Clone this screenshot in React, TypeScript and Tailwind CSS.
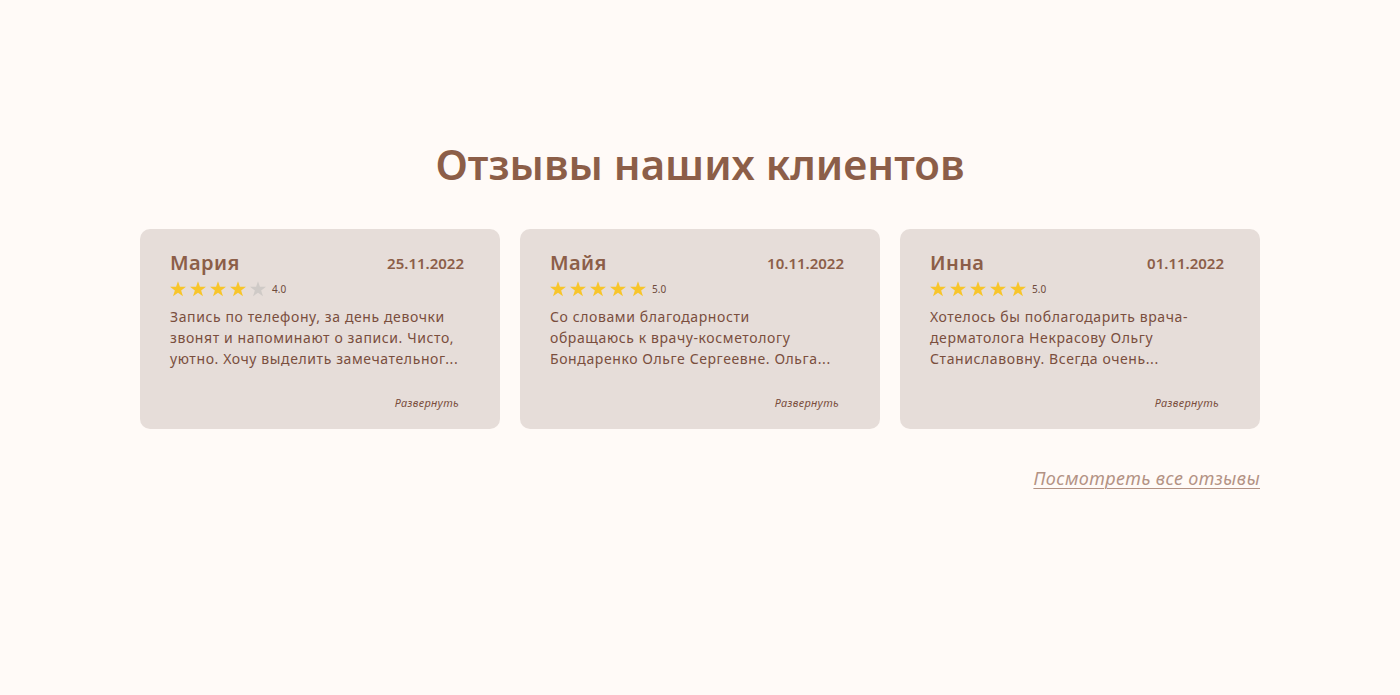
const reviews = [
  {
    name: "Мария",
    date: "25.11.2022",
    rating: 4,
    lines: ["Запись по телефону, за день девочки", "звонят и напоминают о записи. Чисто,", "уютно. Хочу выделить замечательног..."],
  },
  {
    name: "Майя",
    date: "10.11.2022",
    rating: 5,
    lines: ["Со словами благодарности", "обращаюсь к врачу-косметологу", "Бондаренко Ольге Сергеевне. Ольга..."],
  },
  {
    name: "Инна",
    date: "01.11.2022",
    rating: 5,
    lines: ["Хотелось бы поблагодарить врача-", "дерматолога Некрасову Ольгу", "Станиславовну. Всегда очень..."],
  },
];

function Star({ filled }: { filled: boolean }) {
  return (
    <svg width="16" height="16" viewBox="0 0 24 23" className={filled ? "fill-[#f7c52b]" : "fill-[#cfcac7]"}>
      <path d="M12 0l2.9 8.3H24l-7.3 5.4 2.8 8.8L12 17.1l-7.5 5.4 2.8-8.8L0 8.3h9.1z" />
    </svg>
  );
}

export default function App() {
  return (
    <div className="min-h-[695px] bg-[#fffaf7] font-['Noto_Sans',sans-serif]">
      <div className="mx-auto w-[1120px] pt-[135px]">
        <h2 className="text-center text-[42px] font-semibold leading-[58px] text-[#8c5e48]">
          Отзывы наших клиентов
        </h2>

        <div className="mt-[36px] grid grid-cols-3 gap-5">
          {reviews.map((r) => (
            <div key={r.name} className="flex h-[200px] flex-col rounded-[10px] bg-[#e6ddd9] pl-[30px] pr-[36px] pt-[21px]">
              <div className="flex items-center justify-between">
                <span className="text-[20px] font-semibold leading-[26px] tracking-[0.4px] text-[#8c5e48]">{r.name}</span>
                <span className="text-[15px] font-semibold text-[#8c5e48]">{r.date}</span>
              </div>
              <div className="mt-[5px] flex items-center gap-[4px]">
                {[1, 2, 3, 4, 5].map((i) => (
                  <Star key={i} filled={i <= r.rating} />
                ))}
                <span className="ml-[2px] text-[10px] text-[#6e4a3b]">{r.rating.toFixed(1)}</span>
              </div>
              <p className="mt-[9px] whitespace-nowrap text-[14px] leading-[21px] tracking-[0.6px] text-[#7a4e3d]">
                {r.lines.map((l, i) => (
                  <span key={i} className="block">
                    {l}
                  </span>
                ))}
              </p>
              <div className="mt-auto mb-[18px] pr-[5px] text-right text-[11px] italic tracking-[0.3px] text-[#7a4e3d]">Развернуть</div>
            </div>
          ))}
        </div>

        <div className="mt-[36px] text-right">
          <a href="#" className="text-[18px] italic tracking-[0.4px] text-[#b39284] underline underline-offset-[3px] decoration-1">
            Посмотреть все отзывы
          </a>
        </div>
      </div>
    </div>
  );
}
